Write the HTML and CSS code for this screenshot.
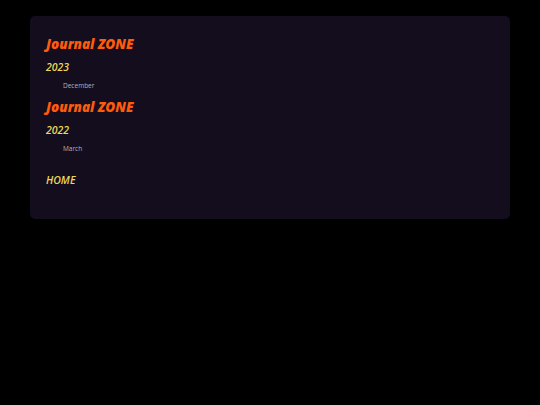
FILE: index.html
```html
<!DOCTYPE html>
<html>
<head>
<meta charset="utf-8">
<link rel="stylesheet" href="styles.css">
</head>
<body>
<div class="card">
  <section class="group">
    <h2 class="title">Journal ZONE</h2>
    <h3 class="year">2023</h3>
    <ul class="months"><li>December</li></ul>
  </section>
  <section class="group">
    <h2 class="title">Journal ZONE</h2>
    <h3 class="year">2022</h3>
    <ul class="months"><li>March</li></ul>
  </section>
  <a class="home">HOME</a>
</div>
</body>
</html>
```
FILE: styles.css
```css
html, body {
  margin: 0;
  padding: 0;
  background: #000;
}
body {
  padding: 16px 30px;
  font-family: "Open Sans", "Noto Sans", sans-serif;
}
.card {
  background: #130d1d;
  border-radius: 5px;
  height: 203px;
  box-sizing: border-box;
  padding: 20px 16px;
}
.title {
  margin: 0;
  font-size: 13.5px;
  line-height: 17px;
  font-weight: 800;
  font-style: italic;
  color: #ff5b0c;
  letter-spacing: 0;
}
.year {
  margin: 7px 0 0;
  font-size: 10.5px;
  line-height: 14px;
  font-weight: 600;
  font-style: italic;
  color: #ecd85a;
}
.months {
  list-style: none;
  margin: 7px 0 0;
  padding: 0 0 0 17px;
  font-size: 6.5px;
  line-height: 9px;
  color: #b6b0bf;
}
.group + .group { margin-top: 9px; }
.home {
  display: block;
  margin-top: 20px;
  font-size: 10.5px;
  line-height: 14px;
  font-weight: 600;
  font-style: italic;
  color: #ecd85a;
}
```
